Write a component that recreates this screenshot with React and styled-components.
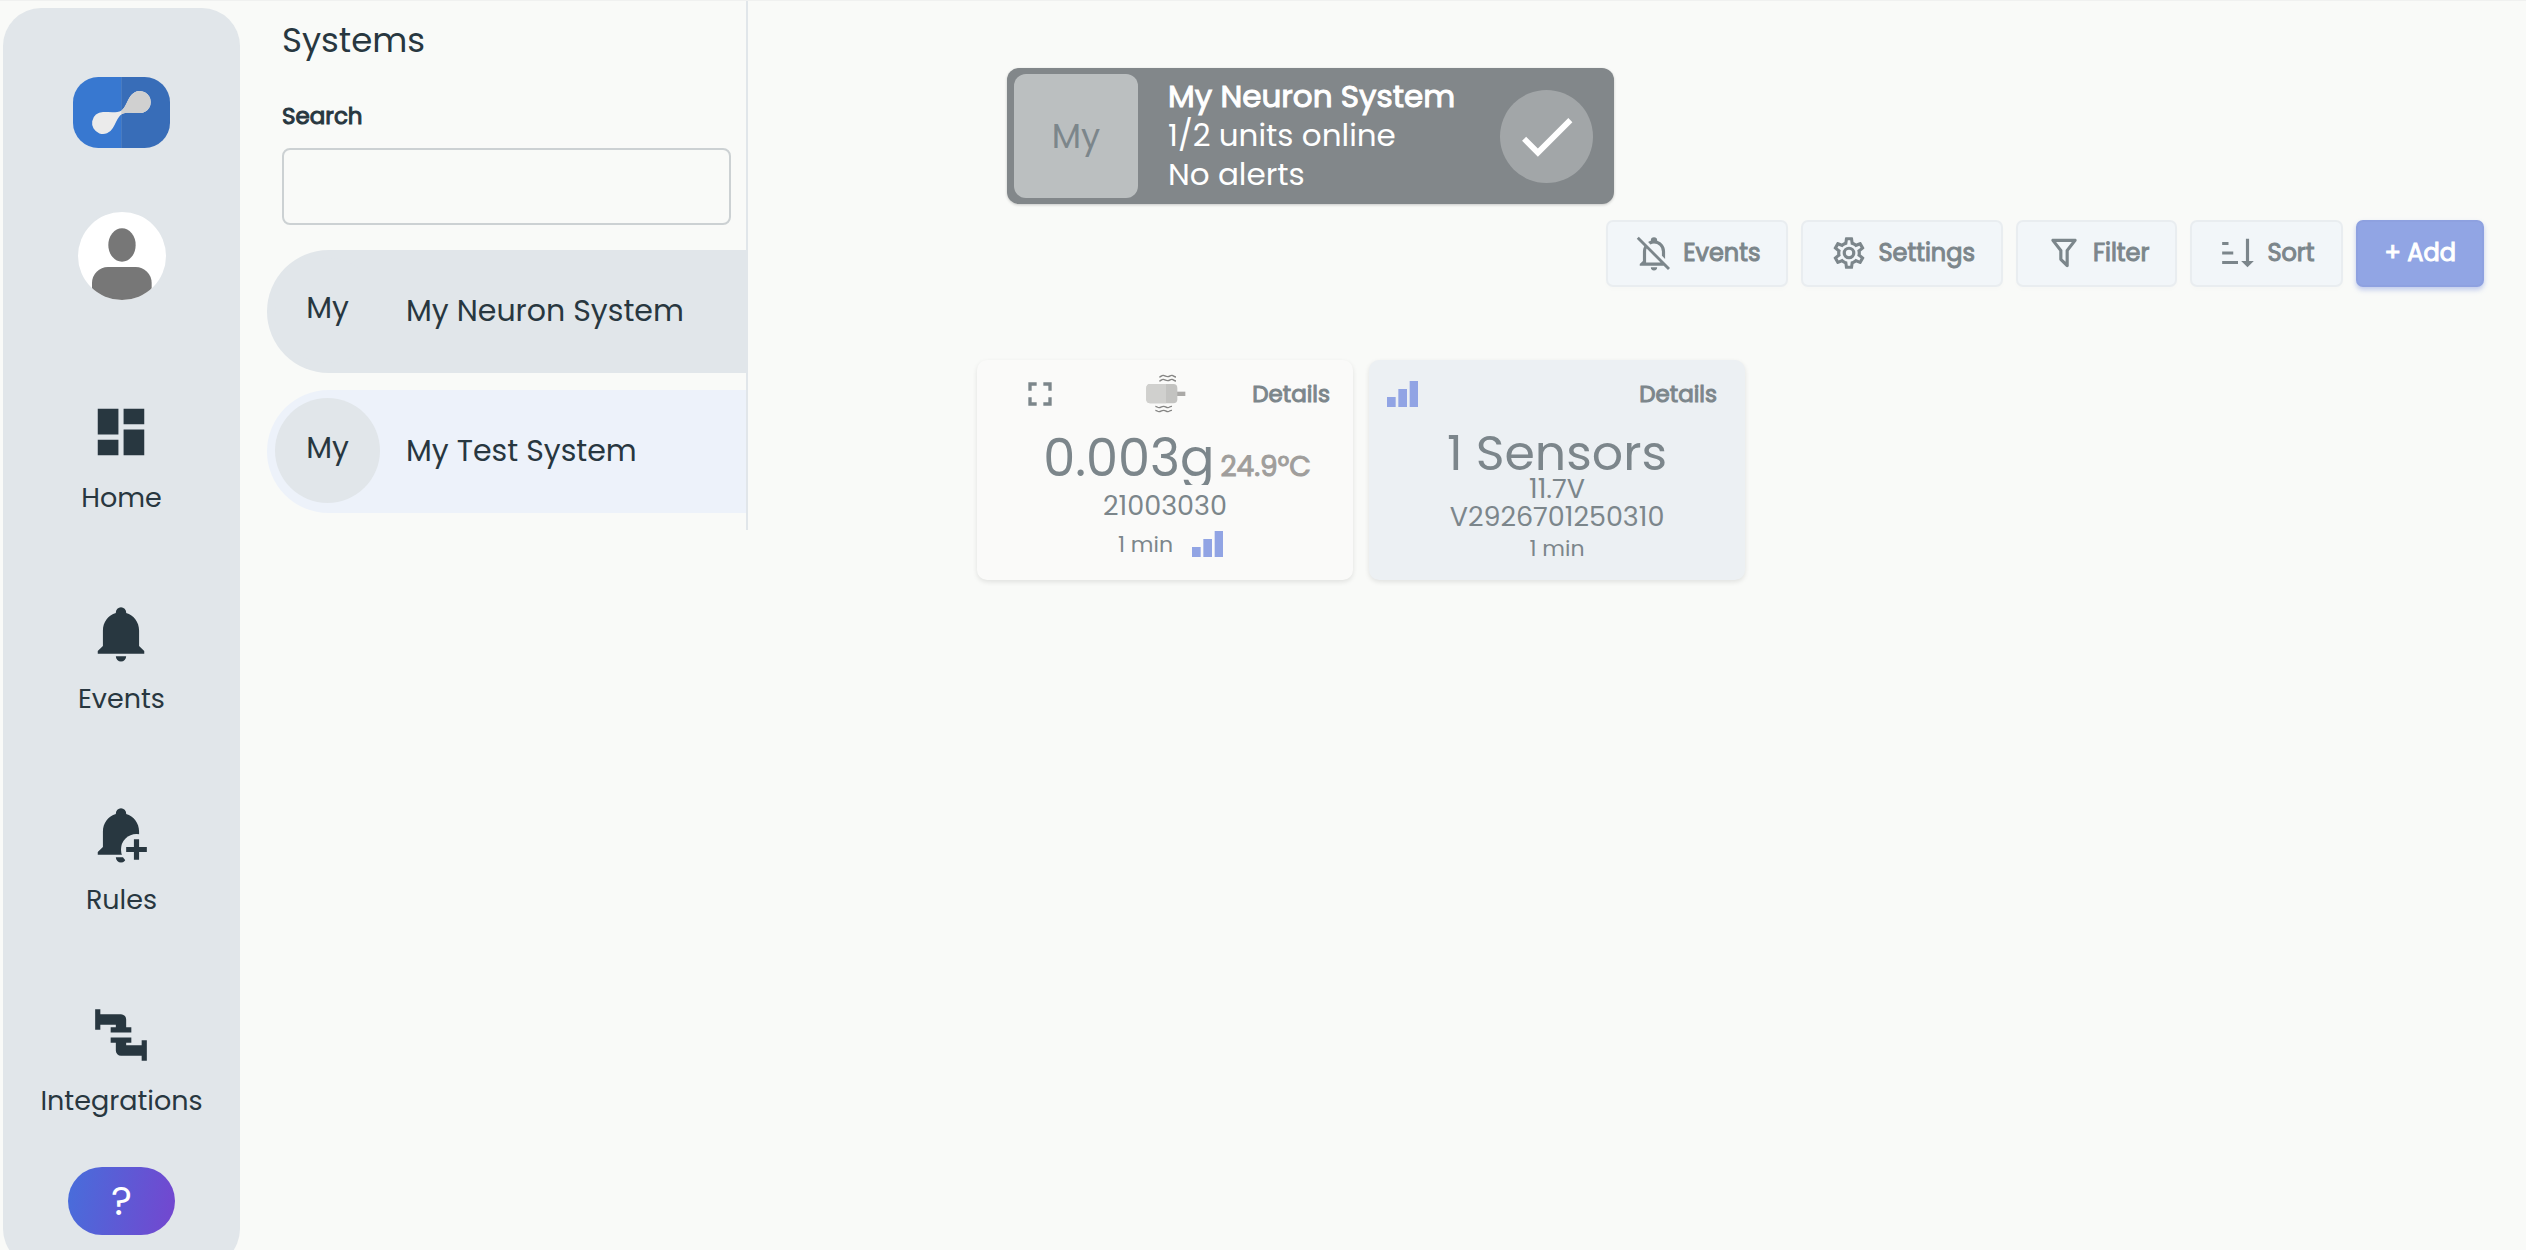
import React from 'react'
import styled, { createGlobalStyle, css } from 'styled-components'

const GlobalStyle = createGlobalStyle`
  * {
    box-sizing: border-box;
  }

  body {
    margin: 0;
    overflow: hidden;
    background: #f9faf8;
    color: #283740;
    font-family: Poppins, Inter, sans-serif;
  }

  h1, p {
    margin: 0;
  }

  svg {
    flex: none;
  }

  button {
    font-family: inherit;
    cursor: pointer;
  }
`;

const paths = {
  dashboard: 'M13 3v6h8V3m-8 18h8V11h-8M3 21h8v-6H3m0-2h8V3H3z',
  bell: 'M21 19v1H3v-1l2-2v-6c0-3.1 2.03-5.83 5-6.71V4a2 2 0 0 1 4 0v.29c2.97.88 5 3.61 5 6.71v6l2 2m-7 2a2 2 0 0 1-4 0',
  pipe: 'M2 2h2v2h8a2 2 0 0 1 2 2v3h2v2H8V9h2V8H4v2H2zM8 13h8v2h-2v1h6v-2h2v8h-2v-2h-8a2 2 0 0 1-2-2v-3H8z',
  bellOff: 'M22.11 21.46L2.39 1.73L1.11 3L5.83 7.72C5.29 8.73 5 9.86 5 11V17L3 19V20H18.11L20.84 22.73L22.11 21.46M7 18V11C7 10.39 7.11 9.79 7.34 9.23L16.11 18H7M10 21H14A2 2 0 0 1 12 23A2 2 0 0 1 10 21M8.29 5.09C8.82 4.75 9.4 4.48 10 4.29C10 4.19 10 4.1 10 4A2 2 0 0 1 12 2A2 2 0 0 1 14 4C14 4.1 14 4.19 14 4.29C16.97 5.17 19 7.9 19 11V15.8L17 13.8V11A5 5 0 0 0 12 6C11.22 6 10.45 6.2 9.76 6.56L8.29 5.09Z',
  cog: 'M12 8A4 4 0 0 1 16 12A4 4 0 0 1 12 16A4 4 0 0 1 8 12A4 4 0 0 1 12 8M12 10A2 2 0 0 0 10 12A2 2 0 0 0 12 14A2 2 0 0 0 14 12A2 2 0 0 0 12 10M10 22C9.75 22 9.54 21.82 9.5 21.58L9.13 18.93C8.5 18.68 7.96 18.34 7.44 17.94L4.95 18.95C4.73 19.03 4.46 18.95 4.34 18.73L2.34 15.27C2.21 15.05 2.27 14.78 2.46 14.63L4.57 12.97L4.5 12L4.57 11L2.46 9.37C2.27 9.22 2.21 8.95 2.34 8.73L4.34 5.27C4.46 5.05 4.73 4.96 4.95 5.05L7.44 6.05C7.96 5.66 8.5 5.32 9.13 5.07L9.5 2.42C9.54 2.18 9.75 2 10 2H14C14.25 2 14.46 2.18 14.5 2.42L14.87 5.07C15.5 5.32 16.04 5.66 16.56 6.05L19.05 5.05C19.27 4.96 19.54 5.05 19.66 5.27L21.66 8.73C21.79 8.95 21.73 9.22 21.54 9.37L19.43 11L19.5 12L19.43 13L21.54 14.63C21.73 14.78 21.79 15.05 21.66 15.27L19.66 18.73C19.54 18.95 19.27 19.04 19.05 18.95L16.56 17.95C16.04 18.34 15.5 18.68 14.87 18.93L14.5 21.58C14.46 21.82 14.25 22 14 22H10M11.25 4L10.88 6.61C9.68 6.86 8.62 7.5 7.85 8.39L5.44 7.35L4.69 8.65L6.8 10.2C6.4 11.37 6.4 12.64 6.8 13.8L4.68 15.36L5.43 16.66L7.86 15.62C8.63 16.5 9.68 17.14 10.87 17.38L11.24 20H12.76L13.13 17.39C14.32 17.14 15.37 16.5 16.14 15.62L18.57 16.66L19.32 15.36L17.2 13.81C17.6 12.64 17.6 11.37 17.2 10.2L19.31 8.65L18.56 7.35L16.15 8.39C15.38 7.5 14.32 6.86 13.12 6.62L12.75 4H11.25Z',
  filter: 'M15 19.88C15.04 20.18 14.94 20.5 14.71 20.71C14.32 21.1 13.69 21.1 13.3 20.71L9.29 16.7C9.06 16.47 8.96 16.16 9 15.87V10.75L4.21 4.62C3.87 4.19 3.95 3.56 4.38 3.22C4.57 3.08 4.78 3 5 3H19C19.22 3 19.43 3.08 19.62 3.22C20.05 3.56 20.13 4.19 19.79 4.62L15 10.75V19.88M7.04 5L11 10.06V15.58L13 17.58V10.05L16.96 5H7.04Z',
  sort: 'M19 17H22L18 21L14 17H17V3H19M2 17H12V19H2M6 5V7H2V5M2 11H9V13H2V11Z',
  fullscreen: 'M5 5H10V7H7V10H5V5M14 5H19V10H17V7H14V5M17 14H19V19H14V17H17V14M10 17V19H5V14H7V17H10Z',
  check: 'M21 7L9 19L3.5 13.5L4.91 12.09L9 16.17L19.59 5.59L21 7Z',
}

const Icon = ({ name, size }) => (
  <svg width={size} height={size} viewBox="0 0 24 24" fill="currentColor" aria-hidden="true">
    <path d={paths[name]} />
  </svg>
)

const BellPlusIcon = () => (
  <svg width="62" height="62" viewBox="0 0 24 24" fill="currentColor" aria-hidden="true">
    <mask id="bellPlusCut">
      <rect width="24" height="24" fill="#fff" />
      <circle cx="18" cy="18" r="6" fill="#000" />
    </mask>
    <path d={paths.bell} mask="url(#bellPlusCut)" />
    <path d="M17 14h2v3h3v2h-3v3h-2v-3h-3v-2h3z" />
  </svg>
)

const Logo = () => (
  <svg width="97" height="71" viewBox="0 0 291 213" role="img" aria-label="Logo">
    <clipPath id="logoShape">
      <rect width="291" height="213" rx="76" />
    </clipPath>
    <g clipPath="url(#logoShape)">
      <rect width="146" height="213" fill="#3878d0" />
      <rect x="145" width="146" height="213" fill="#386db8" />
      <path
        fill="#ebebeb"
        d="M90 105C112 105 132 108 145 101C158 92 163 70 172 58A33 33 0 1 1 201 108C176 108 158 104 146 112C133 121 127 143 119 154A33 33 0 1 1 90 105Z"
      />
      <path
        fill="#d0d0d0"
        d="M145 101C158 92 163 70 172 58A33 33 0 1 1 201 108C176 108 158 104 146 112L145 112Z"
      />
    </g>
  </svg>
)

const Avatar = () => (
  <svg width="88" height="88" viewBox="0 0 264 264" role="img" aria-label="Profile">
    <clipPath id="avatarShape">
      <circle cx="132" cy="132" r="132" />
    </clipPath>
    <g clipPath="url(#avatarShape)">
      <rect width="264" height="264" fill="#fff" />
      <ellipse cx="132" cy="99" rx="41" ry="50" fill="#777" />
      <rect x="42" y="165" width="179" height="140" rx="48" fill="#777" />
    </g>
  </svg>
)

const Signal = () => (
  <svg width="31" height="26" viewBox="0 0 93 78" fill="#91a4e4" role="img" aria-label="Signal">
    <path d="M0 48h26v30H0zM34 24h26v54H34zM68 0h25v78H68z" />
  </svg>
)

const MotorIcon = () => (
  <svg width="40" height="40" viewBox="0 0 120 120" role="img" aria-label="Vibration">
    <rect x="92" y="53" width="26" height="13" fill="#aaa9a7" />
    <rect x="1" y="30" width="93" height="58" rx="12" fill="#c3c3c1" />
    <path d="M13 30h47v58H13a12 12 0 0 1-12-12V42a12 12 0 0 1 12-12z" fill="#d0d0ce" />
    <g fill="none" stroke="#858584" strokeWidth="4">
      <path d="M40 9c5 0 7-6 12-5s6 4 13 4s8-5 13-4s6 5 12 5" />
      <path d="M40 21c5 0 7-6 12-5s6 4 13 4s8-5 13-4s6 5 12 5" />
      <path d="M28 97c5 0 7 5 12 4s6-4 13-4s8 5 13 4s6-5 12-4" />
      <path d="M28 109c5 0 7 5 12 4s6-4 13-4s8 5 13 4s6-5 12-4" />
    </g>
  </svg>
)

const navItems = [
  { label: 'Home', icon: <Icon name="dashboard" size={62} /> },
  { label: 'Events', icon: <Icon name="bell" size={62} /> },
  { label: 'Rules', icon: <BellPlusIcon /> },
  { label: 'Integrations', icon: <Icon name="pipe" size={62} /> },
]

const systems = [
  { name: 'My Neuron System', selected: true },
  { name: 'My Test System', selected: false },
]

const actions = [
  { label: 'Events', icon: 'bellOff' },
  { label: 'Settings', icon: 'cog' },
  { label: 'Filter', icon: 'filter' },
  { label: 'Sort', icon: 'sort' },
]

export const App = () => {

    return (
      <>
        <GlobalStyle />
        <Page>
          <Sidebar>
            <Logo />
            <Profile href="#profile"><Avatar /></Profile>
            <Nav>
              {navItems.map(item => (
                <NavLink key={item.label} href={`#${item.label.toLowerCase()}`}>
                  {item.icon}
                  {item.label}
                </NavLink>
              ))}
            </Nav>
            <HelpButton type="button" aria-label="Help">?</HelpButton>
          </Sidebar>

          <SystemsPanel>
            <PanelTitle>Systems</PanelTitle>
            <SearchLabel htmlFor="search">Search</SearchLabel>
            <SearchInput id="search" type="text" />
            <SystemList>
              {systems.map(system => (
                <SystemLink key={system.name} href="#system" $selected={system.selected}>
                  <Initials>My</Initials>
                  {system.name}
                </SystemLink>
              ))}
            </SystemList>
          </SystemsPanel>

          <Main>
            <Banner>
              <BannerInitials>My</BannerInitials>
              <BannerText>
                <BannerTitle>My Neuron System</BannerTitle>
                <span>1/2 units online</span>
                <span>No alerts</span>
              </BannerText>
              <Status><Icon name="check" size={69} /></Status>
            </Banner>

            <Toolbar>
              {actions.map(action => (
                <ToolButton key={action.label} type="button">
                  <Icon name={action.icon} size={38} />
                  {action.label}
                </ToolButton>
              ))}
              <ToolButton type="button" $primary>+ Add</ToolButton>
            </Toolbar>

            <Cards>
              <Card>
                <CardHeader $left="43px" $right="23px">
                  <ExpandButton type="button" aria-label="Expand"><Icon name="fullscreen" size={40} /></ExpandButton>
                  <MotorIcon />
                  <DetailsLink href="#details">Details</DetailsLink>
                </CardHeader>
                <Reading>
                  0.003g
                  <Temperature>24.9°C</Temperature>
                </Reading>
                <Serial>21003030</Serial>
                <CardFooter $left="11px">
                  1 min
                  <Signal />
                </CardFooter>
              </Card>

              <Card $tinted>
                <CardHeader $left="18px" $right="28px">
                  <Signal />
                  <DetailsLink href="#details">Details</DetailsLink>
                </CardHeader>
                <SensorCount>1 Sensors</SensorCount>
                <Serial>11.7V</Serial>
                <Serial>V2926701250310</Serial>
                <CardFooter>1 min</CardFooter>
              </Card>
            </Cards>
          </Main>
        </Page>
      </>
    );
}

// thickens the regular cut without widening the letters
const heavy = css`
  font-weight: 400;
  -webkit-text-stroke: 1px currentColor;
`;

const Page = styled.div`
  display: flex;
  align-items: flex-start;
  height: 100vh;
  overflow: hidden;
  border-top: 1px solid #f0f1f0;
`;

const Sidebar = styled.aside`
  display: flex;
  flex-direction: column;
  align-items: center;
  flex: none;
  width: 237px;
  margin: 7px 0 0 3px;
  padding: 69px 0 32px;
  border-radius: 38px;
  background: #e1e6ea;
`;

const Profile = styled.a`
  display: flex;
  margin: 64px 0 101px;
`;

const Nav = styled.nav`
  display: flex;
  flex-direction: column;
  gap: 83px;
`;

const NavLink = styled.a`
  display: flex;
  flex-direction: column;
  align-items: center;
  gap: 14px;
  color: #283740;
  font-size: 27px;
  line-height: 42px;
  text-decoration: none;
`;

const HelpButton = styled.button`
  width: 107px;
  height: 68px;
  margin-top: 45px;
  padding: 0;
  border: 0;
  border-radius: 34px;
  background: linear-gradient(100deg, #476edb, #7446cf);
  color: #fff;
  font-size: 40px;
`;

const SystemsPanel = styled.section`
  display: flex;
  flex-direction: column;
  flex: none;
  width: 508px;
  padding: 16px 0 17px 27px;
  border-right: 2px solid #e1e6ea;
`;

const PanelTitle = styled.h1`
  padding-left: 15px;
  font-size: 34px;
  font-weight: 400;
  line-height: 46px;
`;

const SearchLabel = styled.label`
  margin: 35px 0 14px;
  padding-left: 15px;
  font-size: 23px;
  line-height: 36px;
  ${heavy}
`;

const SearchInput = styled.input`
  height: 77px;
  margin: 0 15px 25px 15px;
  padding: 0 16px;
  border: 2px solid #ccd1d3;
  border-radius: 8px;
  background: transparent;
  font-family: inherit;
  font-size: 27px;
`;

const SystemList = styled.div`
  display: flex;
  flex-direction: column;
  gap: 17px;
`;

const SystemLink = styled.a`
  display: flex;
  align-items: center;
  gap: 26px;
  height: 123px;
  padding: 0 0 2px 8px;
  border-radius: 62px 0 0 62px;
  background: ${({ $selected }) => ($selected ? '#e1e6ea' : '#edf2fa')};
  color: #283740;
  font-size: 30px;
  text-decoration: none;
`;

const Initials = styled.span`
  display: flex;
  align-items: center;
  justify-content: center;
  width: 105px;
  height: 105px;
  padding-bottom: 6px;
  border-radius: 50%;
  background: #e1e6ea;
`;

const Main = styled.main`
  display: flex;
  flex-direction: column;
  flex: 1;
  padding: 67px 42px 0 229px;
`;

const Banner = styled.section`
  display: flex;
  align-items: center;
  align-self: flex-start;
  width: 607px;
  height: 136px;
  margin-left: 30px;
  padding: 0 21px 0 7px;
  border-radius: 12px;
  background: #82878a;
  box-shadow: 0 1px 3px rgba(0, 0, 0, .2);
  color: #fff;
`;

const BannerInitials = styled.div`
  display: flex;
  align-items: center;
  justify-content: center;
  width: 124px;
  height: 124px;
  border-radius: 12px;
  background: #bbbfc0;
  color: #7c868b;
  font-size: 34px;
`;

const BannerText = styled.div`
  display: flex;
  flex-direction: column;
  flex: 1;
  margin-left: 30px;
  padding-bottom: 2px;
  font-size: 31px;
  line-height: 39px;
  white-space: nowrap;
`;

const BannerTitle = styled.strong`
  ${heavy}
`;

const Status = styled.div`
  display: flex;
  align-items: center;
  justify-content: center;
  width: 93px;
  height: 93px;
  border-radius: 50%;
  background: #a2a6a8;
`;

const Toolbar = styled.div`
  display: flex;
  justify-content: flex-end;
  gap: 13px;
  margin-top: 16px;
`;

const ToolButton = styled.button`
  display: flex;
  align-items: center;
  gap: 10px;
  height: 67px;
  padding: 0 26px 2px 27px;
  border: 2px solid ${({ $primary }) => ($primary ? '#8ea1e0' : '#e9edf0')};
  border-radius: 7px;
  background: ${({ $primary }) => ($primary ? '#91a5e4' : '#f2f6f9')};
  box-shadow: ${({ $primary }) => ($primary ? '0 3px 5px rgba(110, 135, 220, .4)' : '0 3px 5px rgba(0, 0, 0, .01)')};
  color: ${({ $primary }) => ($primary ? '#fff' : '#7c868b')};
  font-size: 24px;
  ${heavy}
`;

const Cards = styled.section`
  display: flex;
  gap: 16px;
  margin-top: 73px;
`;

const Card = styled.article`
  display: flex;
  flex-direction: column;
  align-items: center;
  width: 376px;
  height: 220px;
  border-radius: 10px;
  background: ${({ $tinted }) => ($tinted ? '#ecf0f3' : '#fafaf9')};
  box-shadow: 0 2px 5px rgba(0, 0, 0, .1);
  color: #7c868b;
`;

const CardHeader = styled.header`
  display: flex;
  align-items: center;
  align-self: stretch;
  height: 68px;
  padding: 0 ${({ $right }) => $right} 0 ${({ $left }) => $left};
`;

const ExpandButton = styled.button`
  display: flex;
  margin-right: 86px;
  padding: 0;
  border: 0;
  background: none;
  color: inherit;
`;

const DetailsLink = styled.a`
  margin-left: auto;
  color: inherit;
  font-size: 23px;
  text-decoration: none;
  ${heavy}
`;

const Reading = styled.p`
  display: flex;
  align-items: baseline;
  gap: 6px;
  height: 57px;
  padding-left: 24px;
  overflow: hidden;
  font-size: 51px;
  line-height: 60px;
`;

const Temperature = styled.span`
  color: #a09e9c;
  font-size: 28px;
  ${heavy}
`;

const SensorCount = styled.p`
  margin-bottom: -3px;
  font-size: 49px;
  line-height: 50px;
`;

const Serial = styled.p`
  font-size: 27px;
  line-height: 28px;

  ${Reading} + & {
    margin-top: 7px;
  }
`;

const CardFooter = styled.footer`
  display: flex;
  align-items: center;
  gap: 19px;
  height: 26px;
  margin-top: ${({ $left }) => ($left ? '11px' : '4px')};
  padding-left: ${({ $left }) => $left || 0};
  font-size: 22px;
`;

export default App;
